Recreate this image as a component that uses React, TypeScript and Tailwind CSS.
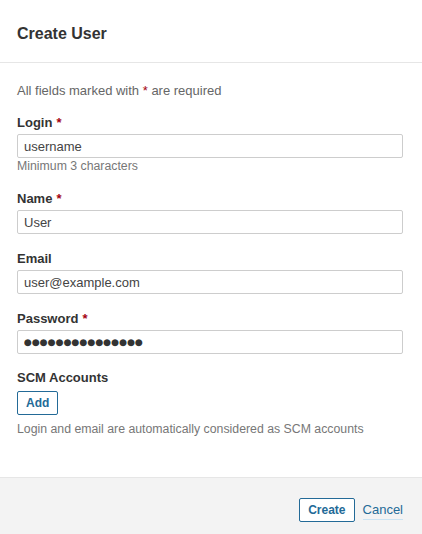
import React from "react";

const font = { fontFamily: '"Liberation Sans", Arial, Helvetica, sans-serif' };

function Req() {
  return <span className="text-[#a4030f] ml-[4px]">*</span>;
}

function Label({ children, required }: { children: React.ReactNode; required?: boolean }) {
  return (
    <label className="block h-[18px] leading-[18px] text-[13px] font-bold text-[#333]">
      {children}
      {required && <Req />}
    </label>
  );
}

function Input({ value, dots }: { value: string; dots?: boolean }) {
  return (
    <input
      type="text"
      defaultValue={value}
      readOnly
      className={
        "block w-full h-[24px] border border-[#cdcdcd] rounded-[2px] px-[6px] bg-white outline-none " +
        (dots ? "text-[9.1px] text-[#333]" : "text-[13px] text-[#444]")
      }
      style={dots ? { fontFamily: '"DejaVu Sans", sans-serif' } : font}
    />
  );
}

export default function App() {
  return (
    <div className="w-[422px] h-[534px] bg-white overflow-hidden flex flex-col" style={font}>
      <div className="pt-[22px] pb-[16px] pl-[17px] border-b border-[#e6e6e6] h-[63px]">
        <h2 className="text-[16px] leading-[24px] font-bold text-[#333]">Create User</h2>
      </div>
      <div className="pl-[17px] pr-[19px] pt-[19px] flex-1">
        <p className="text-[13px] leading-[18px] text-[#666] mb-[14px]">
          All fields marked with <span className="text-[#a4030f]">*</span> are required
        </p>
        <div className="mb-[16px]">
          <div className="mb-[2px]"><Label required>Login</Label></div>
          <Input value="username" />
          <div className="text-[12.3px] leading-[16px] text-[#777]">Minimum 3 characters</div>
        </div>
        <div className="mb-[16px]">
          <div className="mb-[2px]"><Label required>Name</Label></div>
          <Input value="User" />
        </div>
        <div className="mb-[16px]">
          <div className="mb-[2px]"><Label>Email</Label></div>
          <Input value="user@example.com" />
        </div>
        <div className="mb-[15px]">
          <div className="mb-[2px]"><Label required>Password</Label></div>
          <Input dots value="●●●●●●●●●●●●●●●" />
        </div>
        <div>
          <div className="mb-[3px]"><Label>SCM Accounts</Label></div>
          <button
            className="h-[24px] px-[8px] border border-[#236a97] rounded-[2px] text-[#236a97] text-[12px] font-bold bg-white leading-[22px]"
            style={font}
          >
            Add
          </button>
          <div className="mt-[6px] text-[12.3px] leading-[16px] text-[#777]">
            Login and email are automatically considered as SCM accounts
          </div>
        </div>
      </div>
      <div className="h-[57px] shrink-0 bg-[#f3f3f3] border-t border-[#e6e6e6] pt-[20px] pr-[19px] flex justify-end items-start gap-[8px]">
        <button
          className="h-[24px] px-[8px] border border-[#236a97] rounded-[2px] text-[#236a97] text-[12px] font-bold bg-white leading-[22px]"
          style={font}
        >
          Create
        </button>
        <a className="text-[13px] leading-[18px] mt-[3px] text-[#236a97] border-b border-[#cae3f2] cursor-pointer">
          Cancel
        </a>
      </div>
    </div>
  );
}
